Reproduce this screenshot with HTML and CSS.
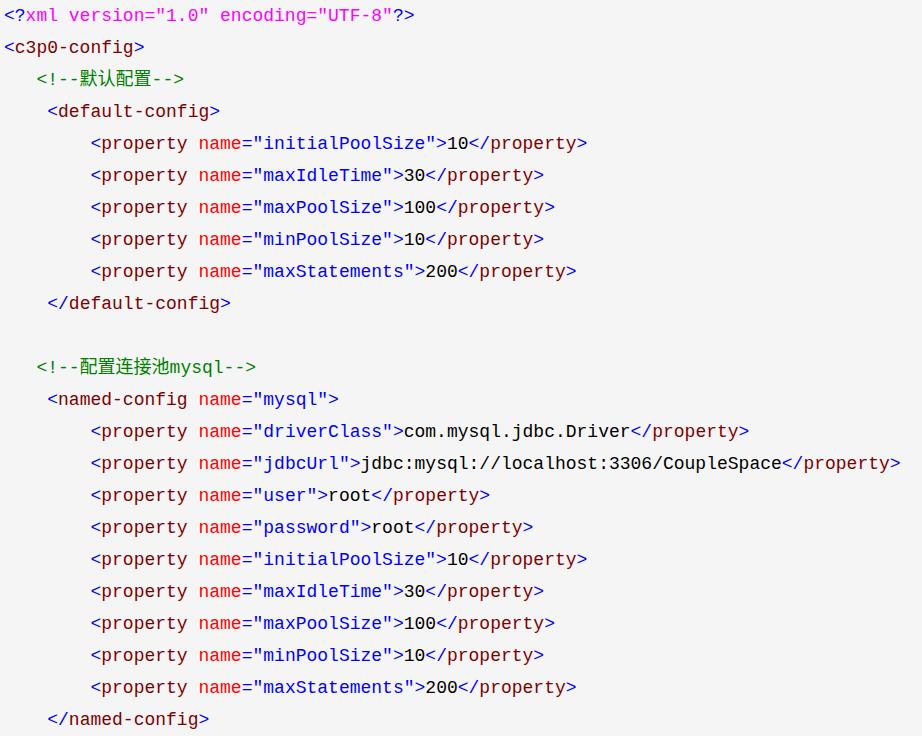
FILE: index.html
```html
<!DOCTYPE html>
<html>
<head>
<meta charset="UTF-8">
<link rel="stylesheet" href="styles.css">
</head>
<body>
<div class="code">
<div class="line"><span class="p">&lt;?</span><span class="d">xml version="1.0" encoding="UTF-8"</span><span class="p">?&gt;</span></div>
<div class="line"><span class="p">&lt;</span><span class="t">c3p0-config</span><span class="p">&gt;</span></div>
<div class="line">   <span class="c">&lt;!--默认配置--&gt;</span></div>
<div class="line">    <span class="p">&lt;</span><span class="t">default-config</span><span class="p">&gt;</span></div>
<div class="line">        <span class="p">&lt;</span><span class="t">property</span> <span class="a">name</span><span class="p">="initialPoolSize"&gt;</span>10<span class="p">&lt;/</span><span class="t">property</span><span class="p">&gt;</span></div>
<div class="line">        <span class="p">&lt;</span><span class="t">property</span> <span class="a">name</span><span class="p">="maxIdleTime"&gt;</span>30<span class="p">&lt;/</span><span class="t">property</span><span class="p">&gt;</span></div>
<div class="line">        <span class="p">&lt;</span><span class="t">property</span> <span class="a">name</span><span class="p">="maxPoolSize"&gt;</span>100<span class="p">&lt;/</span><span class="t">property</span><span class="p">&gt;</span></div>
<div class="line">        <span class="p">&lt;</span><span class="t">property</span> <span class="a">name</span><span class="p">="minPoolSize"&gt;</span>10<span class="p">&lt;/</span><span class="t">property</span><span class="p">&gt;</span></div>
<div class="line">        <span class="p">&lt;</span><span class="t">property</span> <span class="a">name</span><span class="p">="maxStatements"&gt;</span>200<span class="p">&lt;/</span><span class="t">property</span><span class="p">&gt;</span></div>
<div class="line">    <span class="p">&lt;/</span><span class="t">default-config</span><span class="p">&gt;</span></div>
<div class="line"> </div>
<div class="line">   <span class="c">&lt;!--配置连接池mysql--&gt;</span></div>
<div class="line">    <span class="p">&lt;</span><span class="t">named-config</span> <span class="a">name</span><span class="p">="mysql"&gt;</span></div>
<div class="line">        <span class="p">&lt;</span><span class="t">property</span> <span class="a">name</span><span class="p">="driverClass"&gt;</span>com.mysql.jdbc.Driver<span class="p">&lt;/</span><span class="t">property</span><span class="p">&gt;</span></div>
<div class="line">        <span class="p">&lt;</span><span class="t">property</span> <span class="a">name</span><span class="p">="jdbcUrl"&gt;</span>jdbc:mysql://localhost:3306/CoupleSpace<span class="p">&lt;/</span><span class="t">property</span><span class="p">&gt;</span></div>
<div class="line">        <span class="p">&lt;</span><span class="t">property</span> <span class="a">name</span><span class="p">="user"&gt;</span>root<span class="p">&lt;/</span><span class="t">property</span><span class="p">&gt;</span></div>
<div class="line">        <span class="p">&lt;</span><span class="t">property</span> <span class="a">name</span><span class="p">="password"&gt;</span>root<span class="p">&lt;/</span><span class="t">property</span><span class="p">&gt;</span></div>
<div class="line">        <span class="p">&lt;</span><span class="t">property</span> <span class="a">name</span><span class="p">="initialPoolSize"&gt;</span>10<span class="p">&lt;/</span><span class="t">property</span><span class="p">&gt;</span></div>
<div class="line">        <span class="p">&lt;</span><span class="t">property</span> <span class="a">name</span><span class="p">="maxIdleTime"&gt;</span>30<span class="p">&lt;/</span><span class="t">property</span><span class="p">&gt;</span></div>
<div class="line">        <span class="p">&lt;</span><span class="t">property</span> <span class="a">name</span><span class="p">="maxPoolSize"&gt;</span>100<span class="p">&lt;/</span><span class="t">property</span><span class="p">&gt;</span></div>
<div class="line">        <span class="p">&lt;</span><span class="t">property</span> <span class="a">name</span><span class="p">="minPoolSize"&gt;</span>10<span class="p">&lt;/</span><span class="t">property</span><span class="p">&gt;</span></div>
<div class="line">        <span class="p">&lt;</span><span class="t">property</span> <span class="a">name</span><span class="p">="maxStatements"&gt;</span>200<span class="p">&lt;/</span><span class="t">property</span><span class="p">&gt;</span></div>
<div class="line">    <span class="p">&lt;/</span><span class="t">named-config</span><span class="p">&gt;</span></div>
</div>
</body>
</html>
```
FILE: styles.css
```css
html, body {
  margin: 0;
  padding: 0;
  background: #f5f5f5;
}
.code {
  padding: 0 0 0 4px;
  font-family: "Liberation Mono", "Noto Sans CJK SC", monospace;
  font-size: 18px;
  line-height: 32px;
  color: #000000;
}
.line {
  white-space: pre;
  height: 32px;
}
.p { color: #0000ff; }
.d { color: #ff00ff; }
.t { color: #800000; }
.a { color: #ff0000; }
.c { color: #008000; }
```
